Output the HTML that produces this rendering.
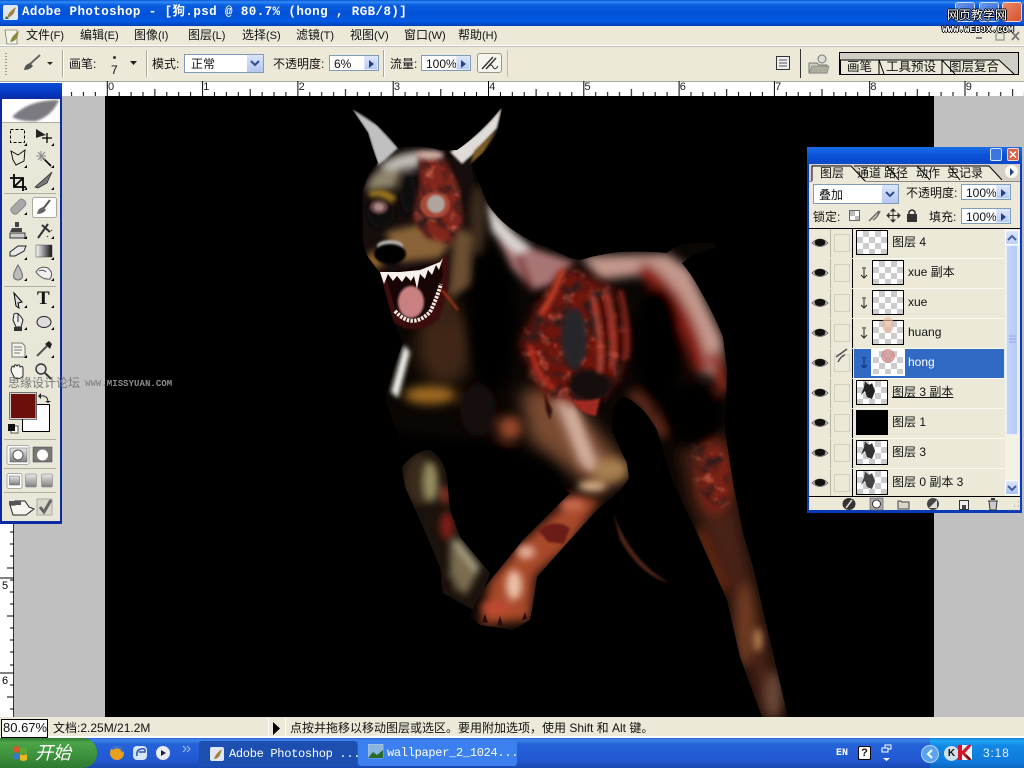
<!DOCTYPE html>
<html><head><meta charset="utf-8"><title>Adobe Photoshop</title>
<style>
html,body{margin:0;padding:0;width:1024px;height:768px;overflow:hidden;background:#c0c0c0}
*{box-sizing:border-box}
body{font-family:"Liberation Sans","Noto Sans CJK SC",sans-serif;font-size:12px;color:#111;position:relative}
.a{position:absolute}
.t{position:absolute;white-space:nowrap;line-height:14px}
.inp{position:absolute;background:#fff;border:1px solid #7f9db9}
.arr{position:absolute;background:linear-gradient(#dbe5fb,#b9cbf3);border:1px solid #dfe6f8}
.arr:after{content:"";position:absolute;left:4px;top:3px;border-left:5px solid #24418a;border-top:4px solid transparent;border-bottom:4px solid transparent}
.row{position:absolute;left:854px;width:150px;height:30px;border-bottom:1px solid #fbfaf2;background:#ece9d8}
.ck{position:absolute;width:32px;height:25px;border:1px solid #000;background-color:#fff;background-image:conic-gradient(#ccc 25%,#fff 0 50%,#ccc 0 75%,#fff 0);background-size:12px 12px}
.eye{position:absolute;left:809px;width:22px;height:29px;background:#ece9d8;border-right:1px solid #b8b6a4}
.lk{position:absolute;left:831px;width:22px;height:29px;background:#ece9d8;border-right:1px solid #000}
.lk i{position:absolute;left:3px;top:5px;width:16px;height:18px;border:1px solid #d2d0be}
.sep{position:absolute;top:50px;height:27px;width:1px;background:#aca899;border-right:1px solid #fff;width:2px}
</style></head><body>

<!-- title bar -->
<div class="a" style="left:0;top:0;width:1024px;height:26px;background:linear-gradient(#0a56d8 0,#2f8cf6 2px,#0a5ee0 5px,#0451d6 14px,#0358e4 21px,#0040b8 26px)"></div>
<svg class="a" style="left:3px;top:4px" width="16" height="17"><rect x="0" y="1" width="15" height="15" rx="2" fill="#dfe8f0"/><path d="M4 14 Q5 8 13 3 L11 9 Q8 13 4 14Z" fill="#a8803c"/><path d="M3 12 l3 3 -4 0z" fill="#3a6a3a"/></svg>
<div class="t" style="left:22px;top:5px;color:#fff;font:bold 12.5px/15px 'Liberation Mono','Noto Sans CJK SC',monospace;letter-spacing:.42px">Adobe Photoshop - [狗.psd @ 80.7% (hong , RGB/8)]</div>
<div class="a" style="left:955px;top:2px;width:20px;height:20px;border-radius:3px;background:linear-gradient(135deg,#6a98ec,#2a62d8);border:1px solid #cdd9f6"></div>
<div class="a" style="left:979px;top:2px;width:20px;height:20px;border-radius:3px;background:linear-gradient(135deg,#6a98ec,#2a62d8);border:1px solid #cdd9f6"></div>
<div class="a" style="left:1002px;top:2px;width:20px;height:20px;border-radius:3px;background:linear-gradient(135deg,#e88a6a,#d8512e);border:1px solid #f4d6cc"></div>

<!-- menu bar -->
<div class="a" style="left:0;top:26px;width:1024px;height:20px;background:#ece9d8;border-bottom:1px solid #fff"></div>
<svg class="a" style="left:4px;top:27px" width="17" height="19"><path d="M1 3h12v14H3z" fill="#f4f4e8" stroke="#555" stroke-width=".6"/><path d="M6 15 Q8 8 15 4 L13 11 Q10 15 6 15Z" fill="#8a8a38"/></svg>
<div class="t" style="left:26px;top:28px">文件<span style="font-size:11px">(F)</span></div>
<div class="t" style="left:80px;top:28px">编辑<span style="font-size:11px">(E)</span></div>
<div class="t" style="left:134px;top:28px">图像<span style="font-size:11px">(I)</span></div>
<div class="t" style="left:188px;top:28px">图层<span style="font-size:11px">(L)</span></div>
<div class="t" style="left:242px;top:28px">选择<span style="font-size:11px">(S)</span></div>
<div class="t" style="left:296px;top:28px">滤镜<span style="font-size:11px">(T)</span></div>
<div class="t" style="left:350px;top:28px">视图<span style="font-size:11px">(V)</span></div>
<div class="t" style="left:404px;top:28px">窗口<span style="font-size:11px">(W)</span></div>
<div class="t" style="left:458px;top:28px">帮助<span style="font-size:11px">(H)</span></div>
<svg class="a" style="left:970px;top:28px" width="52" height="16"><path d="M6 9h6v2H6z" fill="#888"/><rect x="26" y="5" width="8" height="7" fill="none" stroke="#999" stroke-width="1.4"/><path d="M42 4l7 8M49 4l-7 8" stroke="#777" stroke-width="1.8"/></svg>

<!-- options bar -->
<div class="a" style="left:0;top:47px;width:1024px;height:34px;background:#ece9d8"></div>
<div class="a" style="left:5px;top:53px;width:2px;height:22px;background:repeating-linear-gradient(#9a9888 0 1px,#ece9d8 1px 3px)"></div>
<svg class="a" style="left:20px;top:52px" width="36" height="22"><path d="M20 3 L10 12" stroke="#666" stroke-width="2"/><path d="M4 18 Q5 12 10 11 L13 14 Q10 18 4 18Z" fill="#555"/><path d="M27 10l6 0-3 3z" fill="#222"/></svg>
<div class="sep" style="left:62px"></div>
<div class="t" style="left:69px;top:57px">画笔:</div>
<div class="a" style="left:113px;top:56px;width:3px;height:3px;border-radius:2px;background:#333"></div>
<div class="t" style="left:111px;top:63px;font-size:12px">7</div>
<svg class="a" style="left:129px;top:60px" width="9" height="6"><path d="M1 1h7L4.500 5z" fill="#222"/></svg>
<div class="sep" style="left:146px"></div>
<div class="t" style="left:152px;top:57px">模式:</div>
<div class="inp" style="left:184px;top:54px;width:80px;height:19px"></div>
<div class="t" style="left:191px;top:57px">正常</div>
<div class="a" style="left:247px;top:55px;width:16px;height:17px;background:linear-gradient(#dbe5fb,#b4c6f0)"></div>
<svg class="a" style="left:250px;top:60px" width="10" height="7"><path d="M1 1l4 4 4-4" fill="none" stroke="#2b4a93" stroke-width="2"/></svg>
<div class="t" style="left:273px;top:57px">不透明度:</div>
<div class="inp" style="left:329px;top:55px;width:50px;height:16px"></div>
<div class="t" style="left:334px;top:57px">6%</div>
<div class="arr" style="left:364px;top:56px;width:14px;height:14px"></div>
<div class="sep" style="left:383px"></div>
<div class="t" style="left:390px;top:57px">流量:</div>
<div class="inp" style="left:421px;top:55px;width:50px;height:16px"></div>
<div class="t" style="left:426px;top:57px">100%</div>
<div class="arr" style="left:456px;top:56px;width:14px;height:14px"></div>
<div class="a" style="left:477px;top:53px;width:25px;height:20px;background:#f6f5ee;border:1px solid #9a9888;border-radius:3px"></div>
<svg class="a" style="left:479px;top:54px" width="22" height="18"><path d="M3 15 L14 3 M7 15 L17 4" stroke="#333" stroke-width="1.4"/><path d="M9 13q3-4 5 0t5-1" fill="none" stroke="#333"/></svg>
<div class="a" style="left:507px;top:50px;width:1px;height:27px;background:#bdbba9"></div>
<svg class="a" style="left:775px;top:54px" width="17" height="18"><rect x="1.500" y="2.500" width="13" height="13" fill="#eee" stroke="#333"/><path d="M4 6h8M4 9h8M4 12h8" stroke="#555"/></svg>
<div class="a" style="left:800px;top:49px;width:1px;height:29px;background:#333"></div>
<svg class="a" style="left:808px;top:53px" width="22" height="22"><path d="M1 10h8l2 2h8v8H1z" fill="#d0cec0" stroke="#777"/><path d="M1 20l3-7h17l-2 7z" fill="#aeac9e" stroke="#777" stroke-width=".6"/><circle cx="14" cy="6" r="4" fill="#ddd" stroke="#777"/></svg>
<svg class="a" style="left:838px;top:51px" width="182" height="25">
<rect x="1.500" y="1.500" width="179" height="22" fill="#d0cdc4" stroke="#000"/>
<path d="M2 9H41L46 23H2Z M41 9H104L117 23H46Z M104 9H161L176 23H117Z" fill="#ece9d8"/>
<path d="M2 9H41L46 23M41 9V23M41 9H104L117 23M104 9V23M104 9H161L176 23" fill="none" stroke="#000"/>
<path d="M2 9V23" stroke="#000" stroke-width="2"/></svg>
<div class="t" style="left:847px;top:60px;font-size:12.500px">画笔</div>
<div class="t" style="left:886px;top:60px;font-size:12.500px">工具预设</div>
<div class="t" style="left:949px;top:60px;font-size:12.500px">图层复合</div>

<!-- rulers + canvas -->
<div class="a" style="left:0;top:81px;width:1024px;height:15px;background:#fff;border-top:1px solid #a8a89c"></div>
<svg class="a" style="left:0;top:81px" width="1024" height="15">
<defs><pattern id="rt" x="106.800" y="0" width="95.300" height="15" patternUnits="userSpaceOnUse"><path d="M.5 0V15" stroke="#000"/><path d="M12.400 11V15M24.300 11V15M36.200 11V15M48.100 8V15M60 11V15M71.900 11V15M83.800 11V15" stroke="#000"/></pattern></defs>
<rect x="62" y="0" width="962" height="15" fill="url(#rt)"/>
<g font-family="Liberation Sans" font-size="11" fill="#222"><text x="108" y="9">0</text><text x="203.300" y="9">1</text><text x="298.600" y="9">2</text><text x="393.900" y="9">3</text><text x="489.200" y="9">4</text><text x="584.500" y="9">5</text><text x="679.800" y="9">6</text><text x="775.100" y="9">7</text><text x="870.400" y="9">8</text><text x="965.700" y="9">9</text></g></svg>
<div class="a" style="left:0;top:96px;width:14px;height:622px;background:#fff"></div>
<svg class="a" style="left:0;top:520px" width="14" height="198"><path d="M13.500 0V198" stroke="#333"/><path d="M10 12h4M10 24h4M10 36h4M7 48h7M10 60h4M0 58h14M10 72h4M10 84h4M7 96h7M10 108h4M10 120h4M10 132h4M0 153h14M10 145h4M10 165h4M7 177h7M10 189h4" stroke="#000"/><text x="2" y="69" font-size="11" font-family="Liberation Sans">5</text><text x="2" y="164" font-size="11" font-family="Liberation Sans">6</text></svg>
<div class="a" style="left:105px;top:96px;width:829px;height:621px;background:#000"></div>

<!-- dog -->
<svg class="a" style="left:0;top:0" width="1024" height="768" viewBox="0 0 1024 768">
<defs>
<filter id="b1" x="-20%" y="-20%" width="140%" height="140%"><feGaussianBlur stdDeviation="1"/></filter>
<filter id="b2" x="-30%" y="-30%" width="160%" height="160%"><feGaussianBlur stdDeviation="2.500"/></filter>
<filter id="b3" x="-50%" y="-50%" width="200%" height="200%"><feGaussianBlur stdDeviation="3.800"/></filter>
<filter id="b5" x="-50%" y="-50%" width="200%" height="200%"><feGaussianBlur stdDeviation="5"/></filter>
<filter id="b9" x="-60%" y="-60%" width="220%" height="220%"><feGaussianBlur stdDeviation="8"/></filter>
<filter id="gore" x="0" y="0" width="100%" height="100%"><feTurbulence type="fractalNoise" baseFrequency="0.07" numOctaves="3" seed="7"/><feColorMatrix values="0 0 0 0 .03  0 0 0 0 .01  0 0 0 0 .01  3 0 0 0 -1.300"/><feGaussianBlur stdDeviation=".8"/></filter>
<filter id="gore2" x="0" y="0" width="100%" height="100%"><feTurbulence type="fractalNoise" baseFrequency="0.08" numOctaves="3" seed="21"/><feColorMatrix values="0 0 0 0 .85  0 0 0 0 .22  0 0 0 0 .14  0 3 0 0 -1.600"/><feGaussianBlur stdDeviation=".8"/></filter>
<clipPath id="sil"><path d="M352,109 Q365,114 377,125 Q390,137 398,148 Q420,144 440,150 L457,150 Q478,136 502,107 Q500,122 497,133 Q491,146 483,153 L472,164 Q480,185 487,203 Q498,220 513,230 Q530,242 547,247 L570,258 L580,260 Q600,254 620,252 Q645,251 667,253 Q672,248 680,245 Q695,242 713,243 L716,247 Q704,252 693,255 L682,263 Q692,275 700,290 Q714,314 723,337 L727,370 L725,430 L733,483 L743,533 L753,567 L773,653 L788,717 L762,717 L740,657 L727,600 L697,533 L673,483 L657,430 Q643,405 625,397 Q615,400 613,410 L612,430 Q620,450 627,463 L629,478 Q625,486 617,493 L597,510 L567,543 L537,577 Q534,600 530,620 L513,630 L480,625 L470,617 Q478,595 493,577 L523,540 L570,493 L547,477 L500,470 L430,450 L400,440 L385,400 Q392,370 403,343 L393,320 L380,273 L368,257 Q360,240 363,223 Q360,205 363,190 Q368,172 378,163 Q372,148 368,133 Z"/></clipPath>
<clipPath id="leg"><path d="M402,467 Q415,450 430,450 Q444,458 447,477 L450,510 L460,537 L490,573 Q483,595 473,610 L443,593 L440,567 L423,527 L405,487 Z"/></clipPath>
<mask id="mgf" maskUnits="userSpaceOnUse" x="340" y="100" width="460" height="620"><path d="M420,152 L445,160 L458,185 L463,222 L450,244 L427,238 L413,218 L420,185Z" fill="#fff" filter="url(#b2)"/></mask>
<mask id="mgb" maskUnits="userSpaceOnUse" x="340" y="100" width="460" height="620"><path d="M568,268 L612,288 L628,340 L618,380 L590,408 L545,395 L520,345 L538,305Z" fill="#fff" filter="url(#b5)"/></mask>
<mask id="mhg" maskUnits="userSpaceOnUse" x="340" y="100" width="460" height="620"><path d="M688,445 L720,445 L734,500 L720,512 L698,490Z" fill="#fff" filter="url(#b2)"/></mask>
</defs>

<path d="M613,512 Q630,560 669,583 Q640,575 620,540 Z" fill="#4a2418" filter="url(#b1)"/>

<g clip-path="url(#leg)">
<rect x="395" y="445" width="100" height="170" fill="#1a120c"/>
<g filter="url(#b3)">
<ellipse cx="420" cy="480" rx="15" ry="25" fill="#3a2c1c"/>
<ellipse cx="431" cy="482" rx="7" ry="20" fill="#9a8e60"/>
<ellipse cx="445" cy="495" rx="5" ry="9" fill="#8a3020"/>
<ellipse cx="447" cy="526" rx="7" ry="14" fill="#7e1c12"/>
<path d="M450,540 L478,573 L465,596 L450,580Z" fill="#7a6c50"/>
<path d="M455,540 L478,570" stroke="#b8b090" stroke-width="6"/>
<ellipse cx="448" cy="585" rx="8" ry="10" fill="#1a100a"/>
</g></g>

<g clip-path="url(#sil)">
<rect x="340" y="100" width="460" height="620" fill="#0a0604"/>
<!-- big soft shapes -->
<g filter="url(#b9)">
<path d="M520,392 L560,385 L630,470 L600,495 L570,470 L530,440Z" fill="#7a4c30"/>
<ellipse cx="445" cy="345" rx="28" ry="40" fill="#402612"/>
<path d="M725,430 L745,540 L770,650 L785,717 L760,717 L725,590 L690,500 L680,450Z" fill="#4a2012"/>
</g>
<g filter="url(#b5)">
<path d="M580,256 L668,254 L690,270 L722,338 L725,375 L705,375 L680,295 L640,275 L600,280Z" fill="#c4988c"/>
<path d="M640,268 Q685,295 702,372" fill="none" stroke="#8e2018" stroke-width="15"/>
<path d="M714,352 L724,392" stroke="#8e2a1c" stroke-width="12"/>
<ellipse cx="658" cy="345" rx="24" ry="58" fill="#040202"/>
<ellipse cx="692" cy="415" rx="30" ry="30" fill="#060302"/>
<ellipse cx="492" cy="320" rx="24" ry="72" fill="#050403"/>
<path d="M630,393 Q650,405 662,437" fill="none" stroke="#8a3a28" stroke-width="7"/>
<path d="M560,392 Q575,430 590,465" stroke="#c6a090" stroke-width="18" fill="none"/>
<ellipse cx="610" cy="470" rx="18" ry="12" fill="#a88050"/>
<ellipse cx="510" cy="428" rx="12" ry="12" fill="#98462a"/>
<ellipse cx="430" cy="395" rx="26" ry="9" fill="#a06a20"/>
<ellipse cx="478" cy="410" rx="18" ry="26" fill="#170d08"/>
<path d="M385,432 L500,442 L550,465 L575,495 L540,505 L400,475Z" fill="#040201"/>
<path d="M600,500 L570,545 L535,575 L530,620 L480,625 L490,580 L530,535 L575,495Z" fill="#a8482c"/>
<ellipse cx="715" cy="478" rx="18" ry="36" fill="#7a2412"/>
<ellipse cx="745" cy="625" rx="9" ry="42" fill="#6e3a22"/>
<ellipse cx="773" cy="695" rx="8" ry="24" fill="#6a4a38"/>
<path d="M700,530 L725,590" stroke="#6a2a14" stroke-width="10"/>
</g>
<g filter="url(#b3)">
<path d="M490,205 L513,232 L532,248 L575,262 L552,285 L532,290 L512,268 L496,235 Z" fill="#a87474"/>
<path d="M484,200 L513,232 L532,248 L516,254 L492,232 Z" fill="#dcd4d0"/>
<path d="M518,255 L532,290" stroke="#701c18" stroke-width="5"/>
<path d="M568,400 Q578,440 592,470" stroke="#d4b09c" stroke-width="7" fill="none"/>
<ellipse cx="592" cy="486" rx="14" ry="5" fill="#dcb48c"/>
<ellipse cx="758" cy="640" rx="4" ry="12" fill="#c08a58"/>
<ellipse cx="526" cy="552" rx="9" ry="7" fill="#e4aa96"/>
<ellipse cx="514" cy="585" rx="8" ry="15" fill="#ecc0a8"/>
<ellipse cx="497" cy="608" rx="16" ry="6" fill="#c04a30"/>
<ellipse cx="572" cy="505" rx="12" ry="6" fill="#c86a50"/>
<ellipse cx="555" cy="372" rx="24" ry="10" fill="#b86858"/>
</g>
<path d="M404,345 L391,392 L398,398 L410,352 Z" fill="#f2f0ea" filter="url(#b2)"/>
<!-- wound ribs -->
<path d="M568,268 L612,288 L628,340 L618,380 L590,408 L545,395 L520,345 L538,305Z" fill="#701810" filter="url(#b5)"/>
<g mask="url(#mgb)">
<rect x="510" y="255" width="130" height="165" filter="url(#gore2)" opacity=".7"/>
<rect x="510" y="255" width="130" height="165" filter="url(#gore)"/>
</g>
<g filter="url(#b2)">
<ellipse cx="574" cy="338" rx="13" ry="30" fill="#28282c"/>
<ellipse cx="590" cy="385" rx="22" ry="16" fill="#180808"/>
<path d="M592,295 Q602,335 600,372" stroke="#c0503c" stroke-width="4" fill="none"/>
<path d="M606,292 Q616,330 612,368" stroke="#b84434" stroke-width="4" fill="none"/>
<path d="M620,290 Q630,325 626,360" stroke="#9c2c20" stroke-width="4" fill="none"/>
<path d="M599,297 Q609,335 606,372" stroke="#1c0505" stroke-width="3" fill="none"/>
<path d="M613,295 Q623,330 619,365" stroke="#1c0505" stroke-width="3" fill="none"/>
<path d="M562,270 Q555,295 540,315" stroke="#c43c28" stroke-width="6" fill="none"/>
<path d="M530,345 Q535,375 555,390" stroke="#c03024" stroke-width="4" fill="none"/>
</g>
<path d="M572,400 Q590,402 600,398 L596,416 Q580,414 572,400Z" fill="#a02c20" filter="url(#b1)"/>
<path d="M544,392 L552,410 L550,420 L546,410 Z" fill="#300807" filter="url(#b1)"/>
<!-- wound foreleg -->
<path d="M538,530 Q555,518 570,528 L564,544 L548,542 Z" fill="#6c1c16" filter="url(#b1)"/>
<path d="M482,622l3-8 3 9zM497,625l3-9 3 10zM522,620l3-8 2 7z" fill="#2a0c08"/>
<!-- hind wound -->
<g mask="url(#mhg)">
<rect x="680" y="436" width="60" height="80" filter="url(#gore2)" opacity=".7"/>
<rect x="680" y="436" width="60" height="80" filter="url(#gore)"/>
</g>
<!-- head -->
<path d="M378,163 Q400,150 420,150 L470,162 L482,210 L472,280 L440,320 L395,320 L363,250 L363,190Z" fill="#16110d" filter="url(#b1)"/>
<path d="M352,109 L377,125 L398,148 L385,160 L378,165 L368,133Z" fill="#c0c0c0" filter="url(#b1)"/>
<path d="M502,107 L497,128 L478,150 L462,164 L450,152 Q480,136 502,107Z" fill="#e0dcd8" filter="url(#b1)"/>
<path d="M497,130 L483,153 L470,164 L475,150Z" fill="#7a5c28" filter="url(#b1)"/>
<g filter="url(#b3)">
<path d="M380,165 Q400,150 425,152 L418,168 Q395,168 385,178Z" fill="#c0bcb4"/>
<path d="M366,190 Q370,172 385,168 L400,172 L395,188 L375,190Z" fill="#8e846c"/>
<ellipse cx="408" cy="192" rx="8" ry="22" fill="#0d0b09"/>
<path d="M385,232 L430,222 L452,240 L440,258 L400,262 Z" fill="#8a6438"/>
<ellipse cx="375" cy="260" rx="9" ry="9" fill="#8a6028"/>
<path d="M455,225 L472,235 L470,285 L448,300Z" fill="#6c5030"/>
<ellipse cx="478" cy="220" rx="8" ry="35" fill="#3a2a1c"/>
<ellipse cx="445" cy="308" rx="10" ry="20" fill="#3a2412"/>
</g>
<g filter="url(#b2)">
<ellipse cx="381" cy="213" rx="14" ry="15" fill="#0c0a08"/>
<path d="M368,192 Q385,186 397,198 L392,202 Q382,194 370,197Z" fill="#a07a24"/>
</g>
<!-- gore face -->
<path d="M420,152 L445,160 L458,185 L463,222 L450,244 L427,238 L413,218 L420,185Z" fill="#80261c" filter="url(#b2)"/>
<g mask="url(#mgf)">
<rect x="405" y="145" width="65" height="105" filter="url(#gore2)" opacity=".7"/>
<rect x="405" y="145" width="65" height="105" filter="url(#gore)"/>
</g>
<ellipse cx="430" cy="155" rx="14" ry="5" fill="#c8a8a0" filter="url(#b2)"/>
<ellipse cx="435" cy="205" rx="15" ry="13" fill="#a84838" filter="url(#b1)"/>
<ellipse cx="436" cy="204" rx="9" ry="9" fill="#b0a59c" filter="url(#b1)"/>
<!-- eye -->
<ellipse cx="379" cy="207" rx="9" ry="7" fill="#6a4444" filter="url(#b1)"/>
<ellipse cx="379" cy="207" rx="5" ry="4" fill="#a88888" filter="url(#b1)"/>
<!-- mouth -->
<path d="M378,270 Q410,282 447,255 Q452,292 437,320 Q415,338 393,322 Q384,298 378,270Z" fill="#3a0e0a" filter="url(#b1)"/>
<path d="M385,273 L441,262 L443,275 L430,310 L413,322 L396,312 Z" fill="#170404"/>
<ellipse cx="411" cy="302" rx="13" ry="16" fill="#c88080" filter="url(#b1)"/>
<path d="M380,272 L384,284 L388,274 L393,281 L397,276 L402,282 L406,276 L411,281 L414,276 L417,289 L420,274 L425,279 L428,270 L432,275 L436,265 L439,270 L443,258 L440,262 L420,270 L400,272Z" fill="#f6f0ea"/>
<path d="M395,311 Q412,330 430,312 Q437,298 441,284" fill="none" stroke="#f0e8e0" stroke-width="4" stroke-dasharray="2.500 1.200"/>
<!-- nose -->
<ellipse cx="390" cy="246" rx="13" ry="6" fill="#b8b2ac" filter="url(#b1)"/>
<ellipse cx="390" cy="254" rx="16" ry="10" fill="#060505" filter="url(#b1)"/>
<path d="M442,290 Q450,300 458,310" stroke="#b03418" stroke-width="2" fill="none" filter="url(#b1)"/>
</g>
</svg>

<!-- toolbox -->
<div class="a" style="left:0;top:83px;width:62px;height:441px;background:#0a2aa0"></div>
<div class="a" style="left:0;top:83px;width:62px;height:16px;background:linear-gradient(#0a4ed8,#0438c4 60%,#0a2aa0)"></div>
<div class="a" style="left:2px;top:99px;width:58px;height:422px;background:#e9e7d8"></div>
<div class="a" style="left:2px;top:99px;width:58px;height:24px;background:#fff;border-bottom:1px solid #b0ae9e"></div>
<svg class="a" style="left:0;top:83px" width="62" height="441">
<defs><linearGradient id="gr" x1="0" x2="1"><stop offset="0" stop-color="#fff"/><stop offset="1" stop-color="#111"/></linearGradient>
<linearGradient id="gb2" x1="0" y1="0" x2="0" y2="1"><stop offset="0" stop-color="#e8e8e8"/><stop offset="1" stop-color="#808080"/></linearGradient></defs>
<g transform="translate(0,-83)">
<path d="M12,117 Q28,100 59,100 Q52,116 36,121 Q22,122 12,117Z" fill="#7a7a80" filter="url(#b1)"/>
<g fill="none" stroke="#000">
<rect x="10.500" y="129.500" width="14" height="13" stroke-dasharray="3 2"/>
<path d="M36 129l10 6-4 1 -6 2z" fill="#222" stroke="none"/><path d="M47 133v10M42 138h10" stroke-width="1.300"/>
<path d="M11 151 L18 155 L25 150 L24 161 L16 165 L13 160 Z" stroke-width=".9"/>
<path d="M43 158l8 8" stroke-width="1.600"/><path d="M41 151v10M36 156h10M38 152l7 8M45 152l-7 8" stroke="#888"/>
<path d="M14 174V187H26M10 178H23V191M14 187L23 178" stroke-width="1.800"/>
<path d="M35 187 L43 180 L52 172 L47 183 L38 188Z" fill="#777" stroke="#222" stroke-width=".7"/>
</g>
<line x1="4" y1="193.500" x2="56" y2="193.500" stroke="#b0ae9e"/>
<rect x="10" y="203" width="17" height="8" rx="3" transform="rotate(-45 18 207)" fill="#a8a8a8" stroke="#888"/>
<rect x="32.500" y="197.500" width="24" height="20" rx="2" fill="#fff" stroke="#a8a89c"/>
<path d="M50 200 L43 209" stroke="#555" stroke-width="2"/><path d="M37 214 Q38 208 43 207 L46 210 Q43 214 37 214Z" fill="#666"/>
<path d="M15 222h4v5h-4z M12 228h10v4H10z" fill="#444"/><rect x="10" y="233" width="15" height="5" fill="#ccc" stroke="#333"/>
<path d="M38 238 L48 224 M42 225 L50 232" stroke="#333" stroke-width="2"/><path d="M47 236l1 1M51 230l1 1" stroke="#333"/>
<path d="M10 252 L18 246 L26 246 L24 251 L15 256 L10 256Z" fill="#e8e8e8" stroke="#222"/>
<rect x="36" y="245" width="16" height="12" fill="url(#gr)" stroke="#444" stroke-width=".5"/>
<path d="M18 265 Q24 275 22 278 Q18 282 14 278 Q12 275 18 265Z" fill="#bbb" stroke="#666"/>
<path d="M36 272 Q40 265 48 268 Q54 273 50 279 Q42 280 36 272Z" fill="#f0f0f0" stroke="#555"/><path d="M39 271q4-2 7 1" fill="none" stroke="#555"/>
<line x1="4" y1="286.500" x2="56" y2="286.500" stroke="#b0ae9e"/>
<path d="M14 293 L22 302 L18 303 L19 308 L16 306Z" fill="#ddd" stroke="#000"/>
<path d="M14 314 Q18 311 23 320 L21 327 L16 327 L13 320 Z M18 313 V322" fill="#eee" stroke="#222"/><rect x="14" y="327" width="8" height="4" fill="#333"/>
<ellipse cx="44" cy="322" rx="7" ry="5.500" fill="#ddd" stroke="#222"/>
<path d="M12 343h10l3 3v11H12z" fill="#f4f4ea" stroke="#777"/><path d="M14 347h8M14 350h8M14 353h6" stroke="#777"/>
<path d="M37 356 L47 346" stroke="#555" stroke-width="2"/><path d="M45 344l5 5 2-5-3-3z" fill="#222"/>
<path d="M11 370 q1-6 3-3 q1-4 3-1 q2-3 3 1 q3-2 3 2 v7 q-3 4 -8 2 q-3-4 -4-8z" fill="#f6f6f0" stroke="#222"/>
<circle cx="41" cy="369" r="5" fill="#e4e4e0" stroke="#333" stroke-width="1.400"/><path d="M45 373l6 6" stroke="#333" stroke-width="2"/>
<rect x="22.500" y="404.500" width="27" height="27" fill="#fff" stroke="#000"/>
<rect x="10" y="393" width="26.500" height="26" fill="#6c0f0a" stroke="#000"/><rect x="10.500" y="393.500" width="25.500" height="25" fill="none" stroke="#fff" stroke-width=".8"/>
<path d="M41 396 q6-1 7 5" fill="none" stroke="#222"/><path d="M41 393v6l-3-3zM45 401h6l-3 2z" fill="#222"/>
<rect x="11" y="426" width="7" height="7" fill="#fff" stroke="#555"/><rect x="8" y="424" width="7" height="7" fill="#111"/>
<line x1="4" y1="439.500" x2="56" y2="439.500" stroke="#b0ae9e"/>
<rect x="7" y="445.500" width="22" height="19" rx="2" fill="#fff" stroke="#aaa"/><rect x="10" y="448" width="17" height="14" fill="url(#gb2)" stroke="#555" stroke-width=".5"/><circle cx="18" cy="455" r="5" fill="#fff" stroke="#555"/>
<rect x="33" y="447" width="19" height="15" fill="#777" stroke="#444" stroke-width=".5"/><circle cx="42.500" cy="455" r="5.500" fill="#fff"/>
<line x1="4" y1="468.500" x2="56" y2="468.500" stroke="#b0ae9e"/>
<rect x="7" y="473.500" width="15" height="15" rx="2" fill="#fff" stroke="#aaa"/><rect x="9.500" y="476" width="10" height="9" fill="url(#gb2)" stroke="#555" stroke-width=".5"/>
<rect x="25.500" y="474" width="11" height="13" rx="1" fill="url(#gb2)" stroke="#777" stroke-width=".5"/>
<rect x="41.500" y="474" width="11" height="13" rx="1" fill="url(#gb2)" stroke="#777" stroke-width=".5"/>
<line x1="4" y1="492.500" x2="56" y2="492.500" stroke="#b0ae9e"/>
<path d="M10 505h5v-4h10l4 6 5 2-8 6h-13z" fill="#f8f8f0" stroke="#222"/><rect x="9" y="501" width="12" height="4" fill="#555"/>
<rect x="37" y="499" width="15" height="16" fill="#d8d8cc" stroke="#aaa"/><path d="M40 507l4 5 7-12" fill="none" stroke="#666" stroke-width="3"/>
<g fill="#000"><path d="M27 143v3h-3zM54 143v3h-3zM27 165v3h-3zM54 165v3h-3zM27 187v3h-3zM54 187v3h-3zM27 212v3h-3zM27 236v3h-3zM54 236v3h-3zM27 257v3h-3zM54 257v3h-3zM27 278v3h-3zM54 278v3h-3zM27 305v3h-3zM54 305v3h-3zM27 327v3h-3zM54 327v3h-3zM27 355v3h-3zM54 355v3h-3z"/></g>
</g></svg>
<div class="t" style="left:37px;top:289px;font:bold 19px/20px 'Liberation Serif',serif;color:#111">T</div>

<!-- layers panel -->
<div class="a" style="left:807px;top:147px;width:215px;height:366px;background:#0a3aba"></div>
<div class="a" style="left:807px;top:147px;width:215px;height:17px;background:linear-gradient(#1a6ce8,#0a52d8 50%,#0a48c8)"></div>
<div class="a" style="left:990px;top:148px;width:12px;height:13px;background:#3a78e0;border:1px solid #d8e4f8;border-radius:2px"></div>
<div class="a" style="left:1007px;top:148px;width:12px;height:13px;background:#d8654a;border:1px solid #f0d8d0;border-radius:2px"></div>
<svg class="a" style="left:1007px;top:148px" width="12" height="13"><path d="M3 3.500l6 6M9 3.500l-6 6" stroke="#fff" stroke-width="1.500"/></svg>
<div class="a" style="left:809px;top:164px;width:211px;height:346px;background:#ece9d8"></div>
<div class="a" style="left:809px;top:164px;width:211px;height:17px;background:#d4d0c8"></div>
<svg class="a" style="left:809px;top:164px" width="211" height="18"><path d="M3 17V2H42L56 17ZM47 2H80L92 17H58ZM80 2H109L122 17H92ZM110 2H140L150 17H122ZM141 2H180L194 17H150Z" fill="#ece9d8"/><path d="M3 17V2H42L56 17M45 2H78L90 16M78 2H108L121 16M108 2H140L151 16M140 2H180L193 16" fill="none" stroke="#000"/><path d="M0 17.500H3M56 17.500H211" stroke="#888"/></svg>
<div class="t" style="left:820px;top:166px">图层</div>
<div class="t" style="left:857px;top:166px;font-size:12px">通道</div>
<div class="t" style="left:884px;top:166px">路径</div>
<div class="t" style="left:916px;top:166px">动作</div>
<div class="t" style="left:947px;top:166px">史记录</div>
<div class="a" style="left:1005px;top:165px;width:13px;height:13px;border-radius:7px;background:#f8f8f0"></div>
<svg class="a" style="left:1009px;top:168px" width="6" height="8"><path d="M1 0l4 4-4 4z" fill="#24418a"/></svg>
<div class="inp" style="left:813px;top:184px;width:86px;height:20px"></div>
<div class="t" style="left:819px;top:188px">叠加</div>
<div class="a" style="left:882px;top:185px;width:16px;height:18px;background:linear-gradient(#dbe5fb,#b4c6f0)"></div>
<svg class="a" style="left:885px;top:191px" width="10" height="7"><path d="M1 1l4 4 4-4" fill="none" stroke="#2b4a93" stroke-width="2"/></svg>
<div class="t" style="left:906px;top:186px">不透明度:</div>
<div class="inp" style="left:961px;top:184px;width:50px;height:16px"></div>
<div class="t" style="left:966px;top:186px">100%</div>
<div class="arr" style="left:996px;top:185px;width:14px;height:14px"></div>
<div class="t" style="left:813px;top:210px">锁定:</div>
<svg class="a" style="left:847px;top:208px" width="76" height="16"><rect x="2.500" y="2.500" width="10" height="10" fill="#fff" stroke="#666"/><rect x="3" y="3" width="5" height="5" fill="#bbb"/><rect x="8" y="8" width="4" height="4" fill="#bbb"/><path d="M22 13 L32 3 M26 12 q4-2 7-9" stroke="#666" stroke-width="1.500" fill="none"/><path d="M46 1v13M40 7.500h13M46 1l-2 2h4zM46 14l-2-2h4zM40 7.500l2-2v4zM53 7.500l-2-2v4z" stroke="#333" fill="#333"/><rect x="60" y="6" width="10" height="8" fill="#333"/><path d="M62 6V4q3-4 6 0v2" fill="none" stroke="#333" stroke-width="1.500"/></svg>
<div class="t" style="left:929px;top:210px">填充:</div>
<div class="inp" style="left:961px;top:208px;width:50px;height:16px"></div>
<div class="t" style="left:966px;top:210px">100%</div>
<div class="arr" style="left:996px;top:209px;width:14px;height:14px"></div>
<div class="a" style="left:809px;top:228px;width:211px;height:1px;background:#000"></div>

<div class="row" style="top:229px"></div><div class="row" style="top:259px"></div><div class="row" style="top:289px"></div><div class="row" style="top:319px"></div>
<div class="row" style="top:349px;background:#316ac5"></div><div class="row" style="top:379px"></div><div class="row" style="top:409px"></div><div class="row" style="top:439px"></div><div class="row" style="top:469px;height:27px;border:0"></div>

<div class="eye" style="top:229px"></div><div class="lk" style="top:229px"><i></i></div>
<div class="eye" style="top:259px"></div><div class="lk" style="top:259px"><i></i></div>
<div class="eye" style="top:289px"></div><div class="lk" style="top:289px"><i></i></div>
<div class="eye" style="top:319px"></div><div class="lk" style="top:319px"><i></i></div>
<div class="eye" style="top:349px"></div><div class="lk" style="top:349px"><i></i></div>
<div class="eye" style="top:379px"></div><div class="lk" style="top:379px"><i></i></div>
<div class="eye" style="top:409px"></div><div class="lk" style="top:409px"><i></i></div>
<div class="eye" style="top:439px"></div><div class="lk" style="top:439px"><i></i></div>
<div class="eye" style="top:469px;height:27px"></div><div class="lk" style="top:469px;height:27px"><i></i></div>

<svg class="a" style="left:809px;top:229px" width="50" height="268">
<defs><g id="ey"><path d="M3 14 Q11 6 19 14 Q11 21 3 14Z" fill="#d6d4c4" stroke="#555" stroke-width=".7"/><ellipse cx="11" cy="13.500" rx="5.500" ry="3.500" fill="#111"/></g></defs>
<use href="#ey" y="0"/><use href="#ey" y="30"/><use href="#ey" y="60"/><use href="#ey" y="90"/><use href="#ey" y="120"/><use href="#ey" y="150"/><use href="#ey" y="180"/><use href="#ey" y="210"/><use href="#ey" y="240"/>
<path d="M27 128 L38 120 M29 133 Q32 127 36 126" stroke="#555" stroke-width="1.500" fill="none"/>
</svg>

<div class="ck" style="left:856px;top:230px"></div>
<div class="ck" style="left:872px;top:260px"></div>
<div class="ck" style="left:872px;top:290px"></div>
<div class="ck" style="left:872px;top:320px"></div>
<div class="ck" style="left:872px;top:350px;outline:1px solid #fff;border-color:#fff"></div>
<div class="ck" style="left:856px;top:380px"></div>
<div class="a" style="left:856px;top:410px;width:32px;height:25px;background:#000"></div>
<div class="ck" style="left:856px;top:440px"></div>
<div class="ck" style="left:856px;top:470px;height:25px"></div>

<svg class="a" style="left:854px;top:229px" width="50" height="268">
<g fill="none" stroke="#222"><path d="M10 40v8M7 46l3 3 3-3M8 39h4M10 70v8M7 76l3 3 3-3M8 69h4M10 100v8M7 106l3 3 3-3M8 99h4"/><path d="M10 130v8M7 136l3 3 3-3M8 129h4" stroke="#12306e"/></g>
<g fill="#222"><path d="M11 152 q4 6 7 2 l3 8 -3 8 -5-2 -2-6 -4 4 3-8z"/><path d="M11 212 q4 6 7 2 l3 8 -3 8 -5-2 -2-6 -4 4 3-8z" fill="#333"/><path d="M11 242 q4 6 7 2 l3 8 -3 8 -5-2 -2-6 -4 4 3-8z" fill="#444"/></g>
<ellipse cx="34" cy="96" rx="6" ry="8" fill="#e8b8a0" opacity=".7"/><ellipse cx="34" cy="127" rx="7" ry="7" fill="#d09090" opacity=".8"/>
</svg>

<div class="t" style="left:892px;top:235px">图层 4</div>
<div class="t" style="left:908px;top:265px">xue 副本</div>
<div class="t" style="left:908px;top:295px">xue</div>
<div class="t" style="left:908px;top:325px">huang</div>
<div class="t" style="left:908px;top:355px;color:#fff">hong</div>
<div class="t" style="left:892px;top:385px;text-decoration:underline">图层 3 副本</div>
<div class="t" style="left:892px;top:415px">图层 1</div>
<div class="t" style="left:892px;top:445px">图层 3</div>
<div class="t" style="left:892px;top:475px">图层 0 副本 3</div>

<div class="a" style="left:1005px;top:230px;width:14px;height:266px;background:#f3f1e4"></div>
<div class="a" style="left:1006px;top:245px;width:12px;height:190px;background:linear-gradient(90deg,#c3d4fc,#b6cbf8);border:1px solid #e8effc"></div>
<svg class="a" style="left:1009px;top:335px" width="7" height="9"><path d="M0 1h7M0 4h7M0 7h7" stroke="#8ea8e0"/></svg>
<div class="a" style="left:1005px;top:230px;width:14px;height:15px;background:linear-gradient(#dde7fc,#bcd0f8);border:1px solid #fff"></div>
<svg class="a" style="left:1007px;top:234px" width="10" height="7"><path d="M1 6l4-4 4 4" fill="none" stroke="#46609a" stroke-width="2"/></svg>
<div class="a" style="left:1005px;top:480px;width:14px;height:15px;background:linear-gradient(#dde7fc,#a9c1f4);border:1px solid #fff"></div>
<svg class="a" style="left:1007px;top:485px" width="10" height="7"><path d="M1 1l4 4 4-4" fill="none" stroke="#46609a" stroke-width="2"/></svg>

<div class="a" style="left:809px;top:496px;width:211px;height:1px;background:#000"></div>
<svg class="a" style="left:809px;top:497px" width="211" height="15">
<ellipse cx="40" cy="7" rx="6.500" ry="6" fill="#333"/><path d="M37 11l6-8" stroke="#ddd" stroke-width="1.500"/>
<rect x="61" y="1" width="13" height="12" fill="#aaa" stroke="#555" stroke-width=".6"/><circle cx="67.500" cy="7" r="4" fill="#fff" stroke="#333"/>
<path d="M89 4h3l1 1h7v7H89z" fill="#d8d6c6" stroke="#444"/>
<circle cx="124" cy="7" r="6" fill="#444"/><path d="M120 11l8-8v8z" fill="#ddd"/>
<rect x="150.500" y="3.500" width="9" height="9" fill="#eee" stroke="#333"/><rect x="153" y="8" width="4" height="4" fill="#444"/>
<path d="M179 4h10M180 4l1 9h6l1-9" fill="#ccc" stroke="#333"/><rect x="182" y="1" width="4" height="2" fill="#333"/>
<path d="M201 13l1 0M205 13l1 0M209 13l1 0M205 9l1 0M209 9l1 0M209 5l1 0" stroke="#999"/>
</svg>

<!-- status bar -->
<div class="a" style="left:0;top:717px;width:1024px;height:21px;background:#ece9d8;border-bottom:2px solid #fff"></div>
<div class="a" style="left:1px;top:719px;width:47px;height:19px;background:#fff;border:1px solid #000"></div>
<div class="t" style="left:3px;top:721px;font-size:13px">80.67%</div>
<div class="t" style="left:53px;top:721px">文档:2.25M/21.2M</div>
<div class="a" style="left:268px;top:718px;width:1px;height:19px;background:#fff"></div>
<svg class="a" style="left:272px;top:722px" width="9" height="13"><path d="M1 0l7 6.500-7 6.500z" fill="#000"/></svg>
<div class="a" style="left:285px;top:718px;width:1px;height:19px;background:#fff"></div>
<div class="t" style="left:290px;top:721px">点按并拖移以移动图层或选区。要用附加选项，使用 Shift 和 Alt 键。</div>

<!-- taskbar -->
<div class="a" style="left:0;top:738px;width:1024px;height:30px;background:linear-gradient(#2a62d0 0,#3e86ea 2px,#2563d8 6px,#2258d2 22px,#1848b0 30px)"></div>
<div class="a" style="left:0;top:738px;width:97px;height:30px;border-radius:0 14px 14px 0;background:linear-gradient(#2f7a32,#4ca548 15%,#3d913d 60%,#2c7a2f)"></div>
<svg class="a" style="left:11px;top:744px" width="19" height="19"><path d="M2 3q3-2 6 0v6q-3-2-6 0z" fill="#d85828"/><path d="M9 3q3 2 7 0v6q-4 2-7 0z" fill="#58a838"/><path d="M2 10q3-2 6 0v6q-3-2-6 0z" fill="#3878c8"/><path d="M9 10q3 2 7 0v6q-4 2-7 0z" fill="#e8b820"/></svg>
<div class="t" style="left:35px;top:743px;color:#fff;font-size:18px;line-height:20px;font-style:italic">开始</div>
<svg class="a" style="left:106px;top:743px" width="90" height="20"><circle cx="11" cy="10" r="7" fill="#e8a020"/><path d="M6 6q8-5 11 3" stroke="#3a70d0" stroke-width="2.500" fill="none"/><rect x="27" y="3" width="14" height="14" rx="4" fill="#d8e4f8"/><path d="M31 13q-1-6 4-7t4 3h-6" fill="none" stroke="#2a5ab0" stroke-width="1.500"/><circle cx="57" cy="10" r="7" fill="#e8ecf4"/><path d="M55 7l5 3-5 3z" fill="#223"/><path d="M77 3l3 3-3 3M81 3l3 3-3 3" fill="none" stroke="#a8c4ee"/></svg>
<div class="a" style="left:199px;top:741px;width:158px;height:25px;background:#1c4fb0;border-radius:3px"></div>
<div class="a" style="left:358px;top:741px;width:159px;height:25px;background:#3b80ee;border-radius:3px"></div>
<svg class="a" style="left:210px;top:747px" width="16" height="15"><rect x="0" y="0" width="14" height="14" rx="2" fill="#dfe8f0"/><path d="M4 12 Q5 7 12 2 L10 8 Q8 12 4 12Z" fill="#a8803c"/></svg>
<svg class="a" style="left:368px;top:744px" width="16" height="15"><rect x="0" y="0" width="15" height="14" fill="#8ab4e0" stroke="#ddd" stroke-width=".5"/><path d="M0 14l5-6 4 3 6-5v8z" fill="#2a6a2a"/></svg>
<div class="t" style="left:229px;top:747px;color:#fff;font:12px/14px 'Liberation Mono',monospace;letter-spacing:-.3px">Adobe Photoshop ...</div>
<div class="t" style="left:387px;top:746px;color:#fff;font:12px/14px 'Liberation Mono',monospace;letter-spacing:-.3px">wallpaper_2_1024...</div>
<div class="a" style="left:930px;top:738px;width:94px;height:30px;background:linear-gradient(#1a84d8 0,#1ba4f0 3px,#1288e4 8px,#0f7adc 24px,#0d66c0)"></div>
<div class="t" style="left:836px;top:747px;color:#fff;font:bold 10px/13px 'Liberation Mono',monospace">EN</div>
<div class="a" style="left:858px;top:746px;width:13px;height:14px;background:#fff;border:1px solid #000;border-radius:2px;font:bold 11px/12px 'Liberation Sans';text-align:center;color:#111">?</div>
<svg class="a" style="left:880px;top:744px" width="16" height="20"><rect x="5" y="1" width="6" height="4" fill="none" stroke="#fff"/><rect x="2" y="4" width="6" height="4" fill="#2563d8" stroke="#fff"/><path d="M3 14h7l-3.500 3z" fill="#fff"/></svg>
<div class="a" style="left:921px;top:745px;width:18px;height:18px;border-radius:9px;background:#5aa4ee;border:1px solid #b4d4f4"></div>
<svg class="a" style="left:926px;top:749px" width="8" height="10"><path d="M6 1L2 5l4 4" fill="none" stroke="#fff" stroke-width="2"/></svg>
<div class="a" style="left:944px;top:746px;width:15px;height:15px;border-radius:8px;background:#cfe0ec;text-align:center;font:bold 10px/15px 'Liberation Sans';color:#111">K</div>
<svg class="a" style="left:958px;top:745px" width="16" height="16"><rect width="14" height="15" fill="#f4f4f4"/><path d="M0 0h4v6l6-6h4L7 8l7 7H10L4 9v6H0z" fill="#d01828"/><path d="M8 9l5 5-1 1-3-3z" fill="#111"/></svg>
<div class="t" style="left:983px;top:746px;color:#e8f2fc;font-size:12px;letter-spacing:.8px">3:18</div>

<!-- watermarks -->
<div class="t" style="left:8px;top:376px;color:#777;font-size:12px">思缘设计论坛</div>
<div class="t" style="left:85px;top:379px;color:#8c8c8c;font:bold 9px/11px 'Liberation Mono',monospace;letter-spacing:.05px">WWW.MISSYUAN.COM</div>
<div class="t" style="left:947px;top:8px;color:#fff;font-size:12px;text-shadow:-1px 0 0 #000,1px 0 0 #000,0 -1px 0 #000,0 1px 0 #000">网页教学网</div>
<div class="t" style="left:942px;top:24px;color:#fff;font:bold 9.500px/11px 'Liberation Mono',monospace;letter-spacing:-.2px;text-shadow:-1px 0 0 #000,1px 0 0 #000,0 -1px 0 #000,0 1px 0 #000">WWW.WEBJX.COM</div>
</body></html>
